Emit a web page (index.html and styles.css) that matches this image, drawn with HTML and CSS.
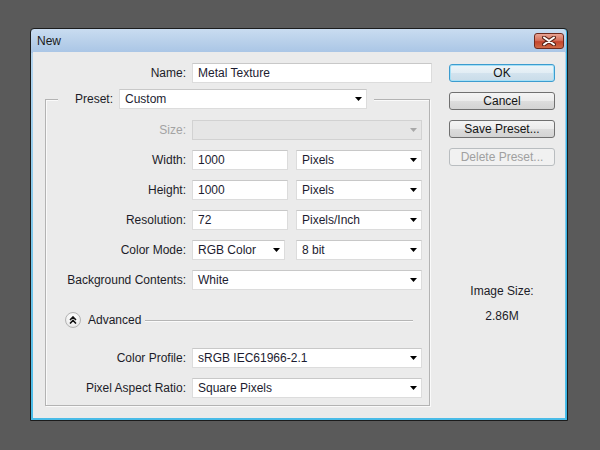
FILE: index.html
```html
<!DOCTYPE html>
<html lang="en">
<head>
    <meta charset="UTF-8">
    <meta name="viewport" content="width=device-width, initial-scale=1.0">
    <title>New</title>
    <link rel="stylesheet" href="styles.css">
</head>
<body>
    <div class="window">
        <div class="titlebar">
            <span class="title">New</span>
            <button class="close" aria-label="Close">
                <svg width="14" height="10" viewBox="0 0 14 10">
                    <path d="M2 1.5L12 8.5M12 1.5L2 8.5" stroke="#5a2418" stroke-width="4" stroke-linecap="round"/>
                    <path d="M2 1.5L12 8.5M12 1.5L2 8.5" stroke="#ffffff" stroke-width="2" stroke-linecap="round"/>
                </svg>
            </button>
        </div>

        <div class="dialog">
            <div class="form">
                <div class="name-row">
                    <label for="name">Name:</label>
                    <input type="text" id="name" class="field" value="Metal Texture">
                </div>

                <fieldset class="preset">
                    <legend>
                        <label>Preset:</label>
                        <div class="select preset-select"><span>Custom</span><svg class="arrow" viewBox="0 0 7 4"><path d="M0 0h7L3.5 4z"/></svg></div>
                    </legend>

                    <div class="rows">
                        <label class="muted">Size:</label>
                        <div class="select disabled"><span></span><svg class="arrow" viewBox="0 0 7 4"><path d="M0 0h7L3.5 4z"/></svg></div>

                        <label for="width">Width:</label>
                        <div class="pair">
                            <input type="text" id="width" class="field num" value="1000">
                            <div class="select unit"><span>Pixels</span><svg class="arrow" viewBox="0 0 7 4"><path d="M0 0h7L3.5 4z"/></svg></div>
                        </div>

                        <label for="height">Height:</label>
                        <div class="pair">
                            <input type="text" id="height" class="field num" value="1000">
                            <div class="select unit"><span>Pixels</span><svg class="arrow" viewBox="0 0 7 4"><path d="M0 0h7L3.5 4z"/></svg></div>
                        </div>

                        <label for="resolution">Resolution:</label>
                        <div class="pair">
                            <input type="text" id="resolution" class="field num" value="72">
                            <div class="select unit"><span>Pixels/Inch</span><svg class="arrow" viewBox="0 0 7 4"><path d="M0 0h7L3.5 4z"/></svg></div>
                        </div>

                        <label>Color Mode:</label>
                        <div class="pair">
                            <div class="select mode"><span>RGB Color</span><svg class="arrow" viewBox="0 0 7 4"><path d="M0 0h7L3.5 4z"/></svg></div>
                            <div class="select unit"><span>8 bit</span><svg class="arrow" viewBox="0 0 7 4"><path d="M0 0h7L3.5 4z"/></svg></div>
                        </div>

                        <label>Background Contents:</label>
                        <div class="select"><span>White</span><svg class="arrow" viewBox="0 0 7 4"><path d="M0 0h7L3.5 4z"/></svg></div>
                    </div>

                    <div class="advanced">
                        <span class="toggle">
                            <svg width="8" height="8" viewBox="0 0 8 8">
                                <path d="M1 4L4 1L7 4M1 7.5L4 4.5L7 7.5" fill="none" stroke="#111" stroke-width="1.6"/>
                            </svg>
                        </span>
                        <span>Advanced</span>
                        <span class="rule"></span>
                    </div>

                    <div class="rows bottom">
                        <label>Color Profile:</label>
                        <div class="select"><span>sRGB IEC61966-2.1</span><svg class="arrow" viewBox="0 0 7 4"><path d="M0 0h7L3.5 4z"/></svg></div>

                        <label>Pixel Aspect Ratio:</label>
                        <div class="select"><span>Square Pixels</span><svg class="arrow" viewBox="0 0 7 4"><path d="M0 0h7L3.5 4z"/></svg></div>
                    </div>
                </fieldset>
            </div>

            <div class="side">
                <button class="btn default">OK</button>
                <button class="btn">Cancel</button>
                <button class="btn">Save Preset...</button>
                <button class="btn" disabled>Delete Preset...</button>

                <div class="info">
                    <div>Image Size:</div>
                    <div class="size">2.86M</div>
                </div>
            </div>
        </div>
    </div>
</body>
</html>
```

FILE: styles.css
```css
body {
    margin: 0;
    background-color: #5a5a5a;
    font-family: "Liberation Sans", Arial, sans-serif;
    font-size: 12px;
    color: #1c1c28;
}

.window {
    width: 538px;
    height: 393px;
    margin: 28px 0 0 30px;
    box-sizing: border-box;
    border: 1px solid #1c1c1c;
    border-radius: 4px 4px 0 0;
    padding: 0 2px 2px 2px;
    display: flex;
    flex-direction: column;
    background: linear-gradient(to bottom, #c9dcf0 0, #a9c5e5 24px, #b4d4ee 24px, #49bbe7 100%);
    box-shadow: inset -1px 0 0 #39b5e4;
}

.titlebar {
    height: 23px;
    display: flex;
    align-items: flex-start;
    justify-content: space-between;
    padding: 0 1px 0 4px;
}

.title {
    margin-top: 5px;
    font-size: 12px;
    color: #1a1a1a;
}

.close {
    margin-top: 4px;
    width: 30px;
    height: 16px;
    padding: 0;
    border: 1px solid #6e2a1e;
    border-radius: 3px;
    background: linear-gradient(to bottom, #e9a393 0, #d6725d 45%, #c4452d 55%, #cf6a47 100%);
    display: flex;
    align-items: center;
    justify-content: center;
}

.dialog {
    flex: 1;
    background-color: #ebebeb;
    display: flex;
    padding: 11px 0 0 12px;
}

.form {
    width: 387px;
}

label {
    text-align: right;
    white-space: nowrap;
}

.name-row {
    display: grid;
    grid-template-columns: 141px 240px;
    column-gap: 6px;
    align-items: center;
}

.field {
    height: 20px;
    box-sizing: border-box;
    margin: 0;
    padding: 0 5px;
    border: 1px solid #dcdcdc;
    border-top-color: #c8c8c8;
    background: #ffffff;
    font-family: inherit;
    font-size: 12px;
    color: #1c1c30;
    outline: none;
}

.field.num {
    width: 96px;
}

.select {
    height: 20px;
    box-sizing: border-box;
    padding: 0 4px 0 5px;
    border: 1px solid #dcdcdc;
    border-top-color: #c8c8c8;
    background: #ffffff;
    color: #1c1c30;
    display: flex;
    align-items: center;
    justify-content: space-between;
    white-space: nowrap;
}

.arrow {
    width: 7px;
    height: 4px;
    fill: #000000;
}

.select.disabled {
    background: #e6e6e6;
    border-color: #d2d2d2;
}

.select.disabled .arrow {
    fill: #a8a8a8;
}

.muted {
    color: #a3a3a3;
}

.preset {
    margin: 6px 0 0 0;
    width: 385px;
    box-sizing: border-box;
    min-width: 0;
    padding: 0 8px 7px 0;
    border: 1px solid #b3b3b3;
    box-shadow: 1px 1px 0 #fafafa, inset 1px 1px 0 #fafafa;
}

.preset legend {
    margin-left: 12px;
    padding: 0 7px 0 17px;
    display: flex;
    align-items: center;
    gap: 6px;
    background-color: #ebebeb;
}

.preset-select {
    width: 248px;
}

.rows {
    display: grid;
    grid-template-columns: 140px 230px;
    column-gap: 6px;
    row-gap: 10px;
    align-items: center;
    margin-top: 11px;
}

.rows.bottom {
    margin-top: 20px;
}

.pair {
    display: flex;
    justify-content: space-between;
}

.select.unit {
    width: 126px;
}

.select.mode {
    width: 93px;
}

.advanced {
    display: flex;
    align-items: center;
    gap: 7px;
    height: 16px;
    margin: 22px 8px 0 19px;
}

.toggle {
    width: 16px;
    height: 16px;
    box-sizing: border-box;
    border: 1px solid #b4b4b4;
    border-radius: 50%;
    background: radial-gradient(circle at 50% 35%, #ffffff 0, #f2f2f2 55%, #d8d8d8 100%);
    display: flex;
    align-items: center;
    justify-content: center;
}

.rule {
    flex: 1;
    height: 1px;
    margin-left: -3px;
    background-color: #b5b5b5;
    box-shadow: 0 1px 0 #fafafa;
}

.side {
    width: 106px;
    margin-left: 17px;
    padding-top: 1px;
    display: flex;
    flex-direction: column;
    gap: 10px;
}

.btn {
    height: 18px;
    padding: 0;
    border: 1px solid #707070;
    border-radius: 3px;
    background: linear-gradient(to bottom, #f4f4f4 0, #ebebeb 50%, #dddddd 51%, #d3d3d3 100%);
    font-family: inherit;
    font-size: 12px;
    color: #141414;
}

.btn.default {
    border-color: #3c9ccf;
    box-shadow: inset 0 0 0 1px #a6e0f6;
    background: linear-gradient(to bottom, #eef5f9 0, #e2edf4 50%, #d3e3ee 51%, #c9dce9 100%);
}

.btn:disabled {
    border-color: #b9bdc0;
    background: #f1f1f1;
    color: #a0a0a0;
}

.info {
    margin-top: 108px;
    text-align: center;
    line-height: 15px;
}

.info .size {
    margin-top: 10px;
}
```
